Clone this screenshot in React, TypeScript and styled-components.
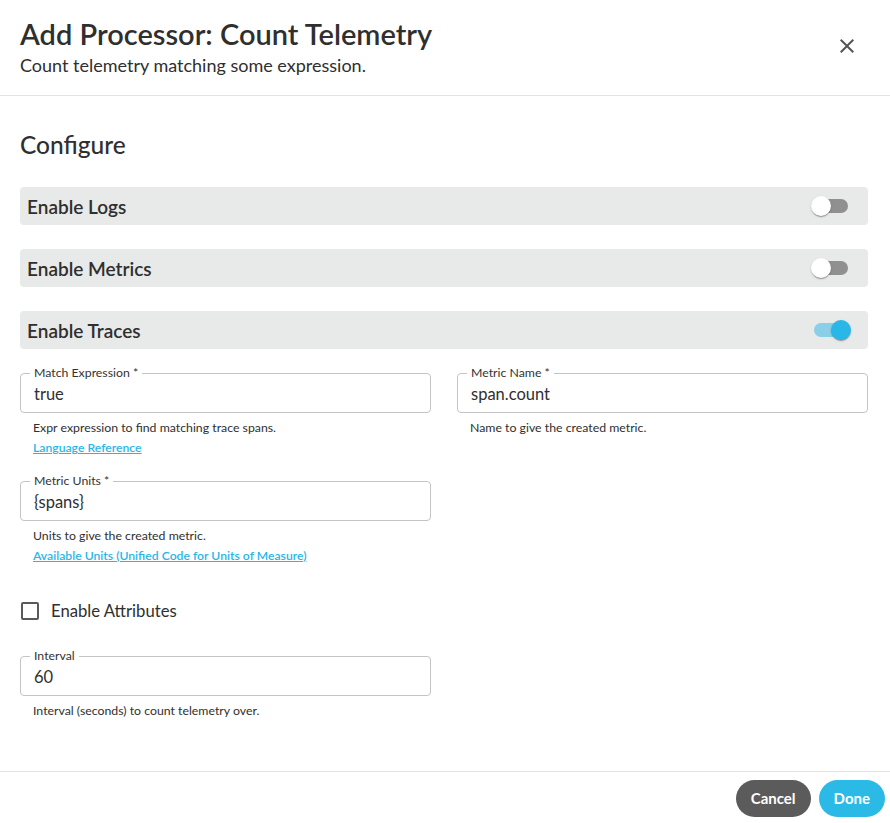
import { createGlobalStyle } from 'styled-components';
import styled from 'styled-components';

const GlobalStyle = createGlobalStyle`
  html, body {
    margin: 0;
    padding: 0;
    background: #ffffff;
  }
  body {
    font-family: Lato, "Noto Sans", sans-serif;
    color: #333333;
  }
`;

const Dialog = styled.div`
  width: 890px;
  height: 823px;
  display: flex;
  flex-direction: column;
  background: #ffffff;
  overflow: hidden;
`;

const Header = styled.header`
  display: flex;
  align-items: flex-start;
  justify-content: space-between;
  padding: 17px 22px 18px 20px;
  border-bottom: 1px solid #e3e3e3;
`;

const Title = styled.h2`
  margin: 0;
  font-size: 29px;
  line-height: 34px;
  font-weight: 600;
  color: #2f2f2f;
`;

const Subtitle = styled.p`
  margin: 2px 0 0;
  font-size: 18px;
  line-height: 24px;
  color: #2f2f2f;
`;

const CloseButton = styled.button`
  border: none;
  background: none;
  padding: 0;
  margin: 17px 9px 0 0;
  width: 24px;
  height: 24px;
  color: #555555;
  cursor: pointer;
`;

const Body = styled.main`
  flex: 1;
  padding: 34px 22px 0 20px;
`;

const SectionTitle = styled.h3`
  margin: 0 0 27px;
  font-size: 24.5px;
  line-height: 30px;
  font-weight: 500;
  color: #2f2f2f;
`;

const ToggleRow = styled.div`
  display: flex;
  align-items: center;
  justify-content: space-between;
  height: 38px;
  padding: 0 8px 0 7px;
  margin-bottom: 24px;
  background: #e8e9e9;
  border-radius: 4px;
  font-size: 19px;
  font-weight: 600;
  color: #2f2f2f;
`;

const SwitchRoot = styled.span`
  position: relative;
  width: 58px;
  height: 38px;
  display: inline-block;
`;

const SwitchTrack = styled.span<{ $on: boolean }>`
  position: absolute;
  left: 12px;
  top: 12px;
  width: 34px;
  height: 14px;
  border-radius: 7px;
  background: ${({ $on }) => ($on ? '#29b6e8' : '#000000')};
  opacity: ${({ $on }) => ($on ? 0.5 : 0.38)};
`;

const SwitchThumb = styled.span<{ $on: boolean }>`
  position: absolute;
  top: 9px;
  left: ${({ $on }) => ($on ? '29px' : '9px')};
  width: 20px;
  height: 20px;
  border-radius: 50%;
  background: ${({ $on }) => ($on ? '#29b6e8' : '#ffffff')};
  box-shadow: 0 2px 1px -1px rgba(0, 0, 0, 0.2), 0 1px 1px 0 rgba(0, 0, 0, 0.14),
    0 1px 3px 0 rgba(0, 0, 0, 0.12);
`;

const FieldGrid = styled.div`
  display: grid;
  grid-template-columns: 411px 411px;
  column-gap: 26px;
  row-gap: 25px;
`;

const Field = styled.div`
  display: flex;
  flex-direction: column;
`;

const InputBox = styled.div`
  position: relative;
  height: 40px;
  box-sizing: border-box;
  border: 1px solid #c4c4c4;
  border-radius: 4px;
  padding: 0 13px;
  display: flex;
  align-items: center;
`;

const FloatingLabel = styled.span`
  position: absolute;
  top: -8px;
  left: 9px;
  padding: 0 4px;
  background: #ffffff;
  font-size: 12.3px;
  line-height: 14px;
  color: #333333;
`;

const Value = styled.div`
  font-size: 16.5px;
  color: #2f2f2f;
  margin-top: 1px;
`;

const Helper = styled.div`
  margin: 7px 13px 0;
  font-size: 12.3px;
  line-height: 16px;
  color: #2f2f2f;
`;

const HelpLink = styled.a`
  display: inline-block;
  margin: 4px 13px 0;
  font-size: 12.2px;
  line-height: 16px;
  font-weight: 600;
  color: #29b6e8;
  text-decoration: underline;
`;

const CheckboxRow = styled.label`
  display: flex;
  align-items: center;
  gap: 12px;
  margin: 37px 0 35px;
  font-size: 16.7px;
  color: #2f2f2f;
`;

const CheckboxBox = styled.span`
  width: 14px;
  height: 14px;
  margin-left: 1px;
  border: 2px solid #5a5a5a;
  border-radius: 2px;
`;

const Footer = styled.footer`
  display: flex;
  justify-content: flex-end;
  gap: 8px;
  padding: 8px 5px 6px 0;
  border-top: 1px solid #e3e3e3;
`;

const Button = styled.button<{ $primary?: boolean }>`
  height: 37px;
  padding: 0 15px 1px;
  border: none;
  border-radius: 19px;
  font-family: inherit;
  font-size: 15px;
  font-weight: 700;
  color: #ffffff;
  background: ${({ $primary }) => ($primary ? '#2bb9e6' : '#5b5b5c')};
  cursor: pointer;
`;

function Switch({ on }: { on: boolean }) {
  return (
    <SwitchRoot>
      <SwitchTrack $on={on} />
      <SwitchThumb $on={on} />
    </SwitchRoot>
  );
}

type FieldProps = {
  label: string;
  value: string;
  helper: string;
  link?: string;
};

function TextField({ label, value, helper, link }: FieldProps) {
  return (
    <Field>
      <InputBox>
        <FloatingLabel>{label}</FloatingLabel>
        <Value>{value}</Value>
      </InputBox>
      <Helper>{helper}</Helper>
      {link && (
        <div>
          <HelpLink href="#">{link}</HelpLink>
        </div>
      )}
    </Field>
  );
}

export default function App() {
  return (
    <Dialog>
      <GlobalStyle />
      <Header>
        <div>
          <Title>Add Processor: Count Telemetry</Title>
          <Subtitle>Count telemetry matching some expression.</Subtitle>
        </div>
        <CloseButton aria-label="close">
          <svg width="24" height="24" viewBox="0 0 24 24" fill="currentColor">
            <path d="M19 6.41 17.59 5 12 10.59 6.41 5 5 6.41 10.59 12 5 17.59 6.41 19 12 13.41 17.59 19 19 17.59 13.41 12z" />
          </svg>
        </CloseButton>
      </Header>
      <Body>
        <SectionTitle>Configure</SectionTitle>
        <ToggleRow>
          Enable Logs
          <Switch on={false} />
        </ToggleRow>
        <ToggleRow>
          Enable Metrics
          <Switch on={false} />
        </ToggleRow>
        <ToggleRow>
          Enable Traces
          <Switch on={true} />
        </ToggleRow>
        <FieldGrid>
          <TextField
            label="Match Expression *"
            value="true"
            helper="Expr expression to find matching trace spans."
            link="Language Reference"
          />
          <TextField
            label="Metric Name *"
            value="span.count"
            helper="Name to give the created metric."
          />
          <TextField
            label="Metric Units *"
            value="{spans}"
            helper="Units to give the created metric."
            link="Available Units (Unified Code for Units of Measure)"
          />
        </FieldGrid>
        <CheckboxRow>
          <CheckboxBox />
          Enable Attributes
        </CheckboxRow>
        <FieldGrid>
          <TextField
            label="Interval"
            value="60"
            helper="Interval (seconds) to count telemetry over."
          />
        </FieldGrid>
      </Body>
      <Footer>
        <Button>Cancel</Button>
        <Button $primary>Done</Button>
      </Footer>
    </Dialog>
  );
}
